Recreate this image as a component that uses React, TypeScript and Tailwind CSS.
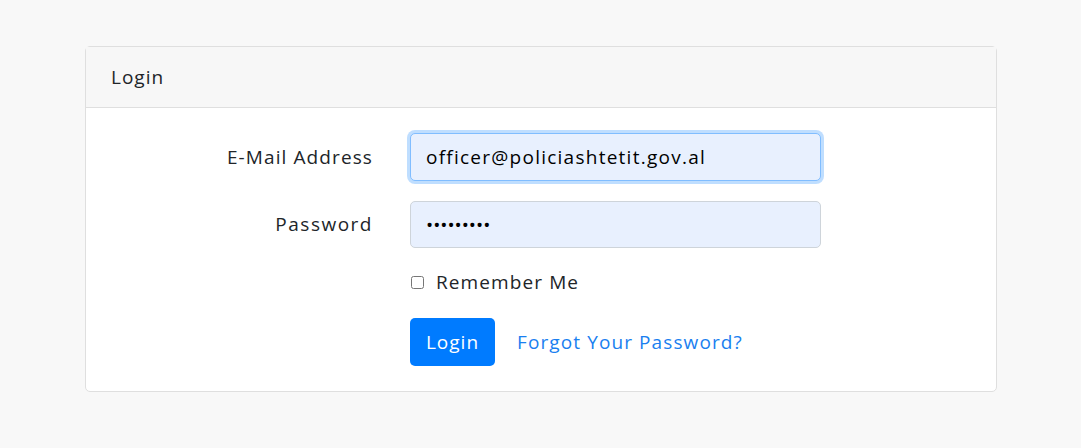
import React from 'react';

const font = { fontFamily: '"Open Sans", "Liberation Sans", sans-serif' };

export default function App() {
  return (
    <div className="min-h-screen bg-[#f8f8f8] pt-[46px] pl-[85px] text-[#212529]" style={font}>
      <div className="w-[912px] rounded-[5px] border border-[#dfdfdf] bg-white">
        <div className="flex h-[61px] items-center border-b border-[#dfdfdf] bg-[#f7f7f7] px-[25px] text-[19px] tracking-[1px]">
          Login
        </div>

        <div className="py-[25px] text-[19px] tracking-[1.1px]">
          <div className="mb-[20px] flex items-center">
            <label className="w-[287px] text-right">E-Mail Address</label>
            <input
              readOnly
              type="email"
              value="officer@policiashtetit.gov.al"
              className="ml-[37px] h-[48px] w-[411px] rounded-[5px] border border-[#80bdff] bg-[#e8f0fe] px-[15px] text-[19px] tracking-[1.25px] text-black shadow-[0_0_0_3px_rgba(0,123,255,0.25)] outline-none"
            />
          </div>

          <div className="mb-[20px] flex items-center">
            <label className="w-[287px] text-right tracking-[1.5px]">Password</label>
            <input
              readOnly
              type="password"
              value="123456789"
              className="ml-[37px] h-[47px] w-[411px] rounded-[5px] border border-[#ced4da] bg-[#e8f0fe] px-[15px] text-[19px] tracking-[0px] text-black outline-none"
            />
          </div>

          <div className="mb-[21px] ml-[325px] flex h-[29px] items-center">
            <input type="checkbox" className="h-[13px] w-[13px]" />
            <label className="ml-[12px]">Remember Me</label>
          </div>

          <div className="ml-[324px] flex items-center">
            <button className="h-[48px] w-[85px] rounded-[5px] bg-[#007bff] text-[19px] tracking-[1px] text-white">Login</button>
            <a href="#" className="ml-[22px] text-[#1a7ff0]">Forgot Your Password?</a>
          </div>
        </div>
      </div>
    </div>
  );
}
